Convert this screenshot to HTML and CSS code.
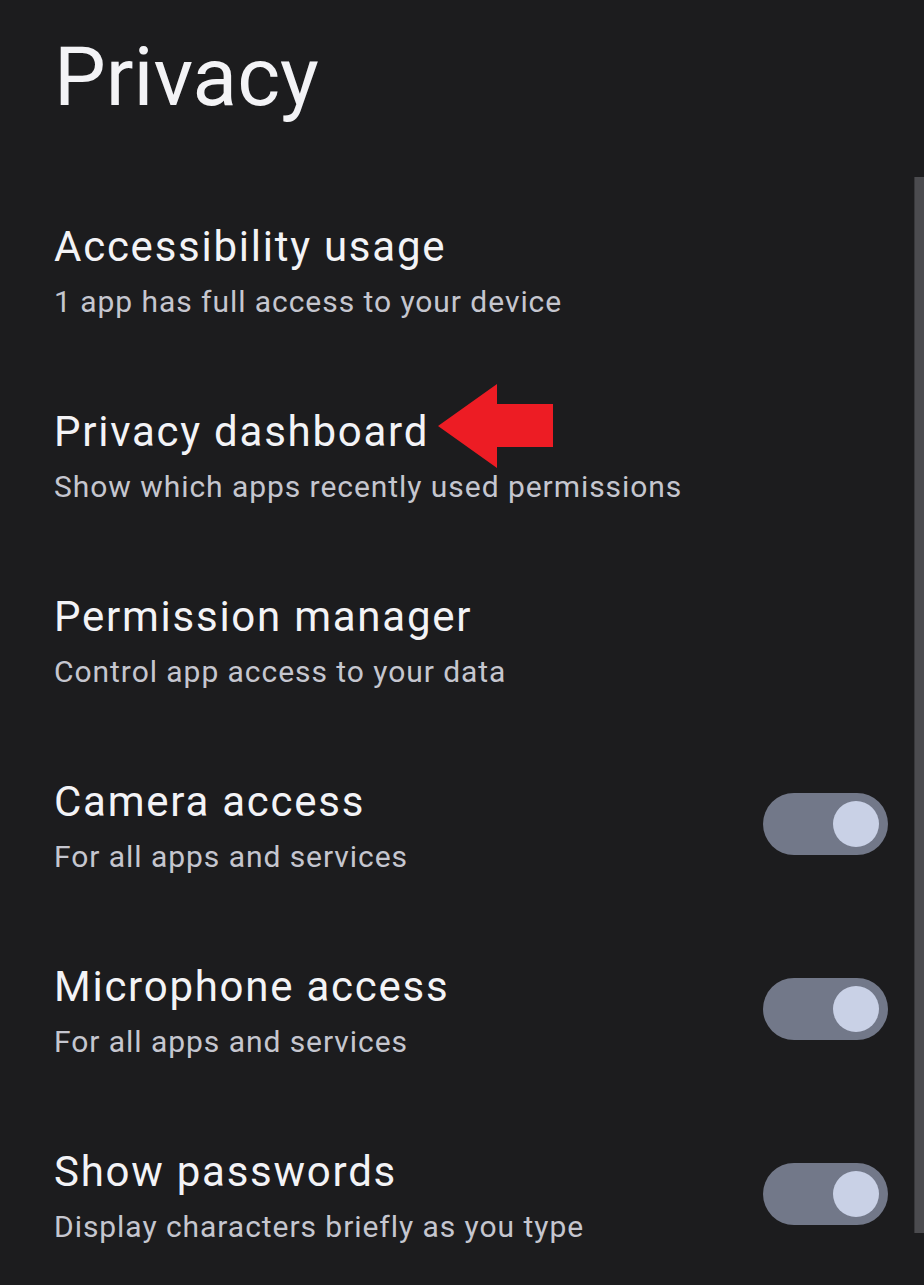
FILE: index.html
```html
<!DOCTYPE html>
<html lang="en">
<head>
<meta charset="utf-8">
<title>Privacy</title>
<link rel="stylesheet" href="styles.css">
</head>
<body>
<main class="screen">
  <header class="page-header">
    <h1 class="page-title">Privacy</h1>
  </header>
  <ul class="settings-list">
    <li class="setting">
      <div class="setting-text">
        <div class="setting-title">Accessibility usage</div>
        <div class="setting-summary">1 app has full access to your device</div>
      </div>
    </li>
    <li class="setting">
      <div class="setting-text">
        <div class="setting-title"><span class="annotated">Privacy dashboard<svg class="arrow" width="118" height="86" viewBox="0 0 118 86" aria-hidden="true"><polygon points="1,42 60,0 60,20 116,20 116,63 60,63 60,84" fill="#ed1c24"/></svg></span></div>
        <div class="setting-summary">Show which apps recently used permissions</div>
      </div>
    </li>
    <li class="setting">
      <div class="setting-text">
        <div class="setting-title">Permission manager</div>
        <div class="setting-summary">Control app access to your data</div>
      </div>
    </li>
    <li class="setting">
      <div class="setting-text">
        <div class="setting-title">Camera access</div>
        <div class="setting-summary">For all apps and services</div>
      </div>
      <span class="switch is-on" role="switch" aria-checked="true"><span class="switch-knob"></span></span>
    </li>
    <li class="setting">
      <div class="setting-text">
        <div class="setting-title">Microphone access</div>
        <div class="setting-summary">For all apps and services</div>
      </div>
      <span class="switch is-on" role="switch" aria-checked="true"><span class="switch-knob"></span></span>
    </li>
    <li class="setting">
      <div class="setting-text">
        <div class="setting-title">Show passwords</div>
        <div class="setting-summary">Display characters briefly as you type</div>
      </div>
      <span class="switch is-on" role="switch" aria-checked="true"><span class="switch-knob"></span></span>
    </li>
  </ul>
  <div class="scroll-thumb"></div>
</main>
</body>
</html>
```

FILE: styles.css
```css
html, body {
  margin: 0;
  padding: 0;
  background: #1c1c1e;
}

body {
  font-family: Roboto, "Noto Sans", sans-serif;
  color: #f3f3f6;
}

.screen {
  position: relative;
  width: 924px;
  height: 1285px;
  overflow: hidden;
  box-sizing: border-box;
  padding-left: 54px;
  padding-right: 36px;
}

.page-header {
  padding-top: 29px;
  padding-bottom: 54px;
}

.page-title {
  margin: 0;
  font-size: 82px;
  line-height: 96px;
  font-weight: 400;
  color: #f3f3f6;
}

.settings-list {
  list-style: none;
  margin: 0;
  padding: 0;
}

.setting {
  height: 185px;
  display: flex;
  align-items: center;
  justify-content: space-between;
}

.setting-text {
  display: flex;
  flex-direction: column;
}

.setting-title {
  font-size: 42px;
  line-height: 50px;
  letter-spacing: 1.75px;
  color: #f3f3f6;
}

.setting-summary {
  margin-top: 10px;
  font-size: 30px;
  line-height: 40px;
  letter-spacing: 0.95px;
  color: #c5c6cf;
}

.annotated {
  position: relative;
}

.arrow {
  position: absolute;
  left: calc(100% + 8px);
  top: -23px;
}

.switch {
  position: relative;
  flex: none;
  width: 125px;
  height: 62px;
  margin-top: -6px;
  border-radius: 31px;
  background: #727889;
  display: flex;
  align-items: center;
  justify-content: flex-end;
  padding-right: 9px;
  box-sizing: border-box;
}

.switch-knob {
  width: 46px;
  height: 46px;
  border-radius: 50%;
  background: #c9d1e6;
}

.scroll-thumb {
  position: absolute;
  right: 0;
  top: 177px;
  width: 10px;
  height: 1056px;
  background: #4b4b4f;
  border-left: 1px solid #38383b;
  box-sizing: border-box;
}
```
